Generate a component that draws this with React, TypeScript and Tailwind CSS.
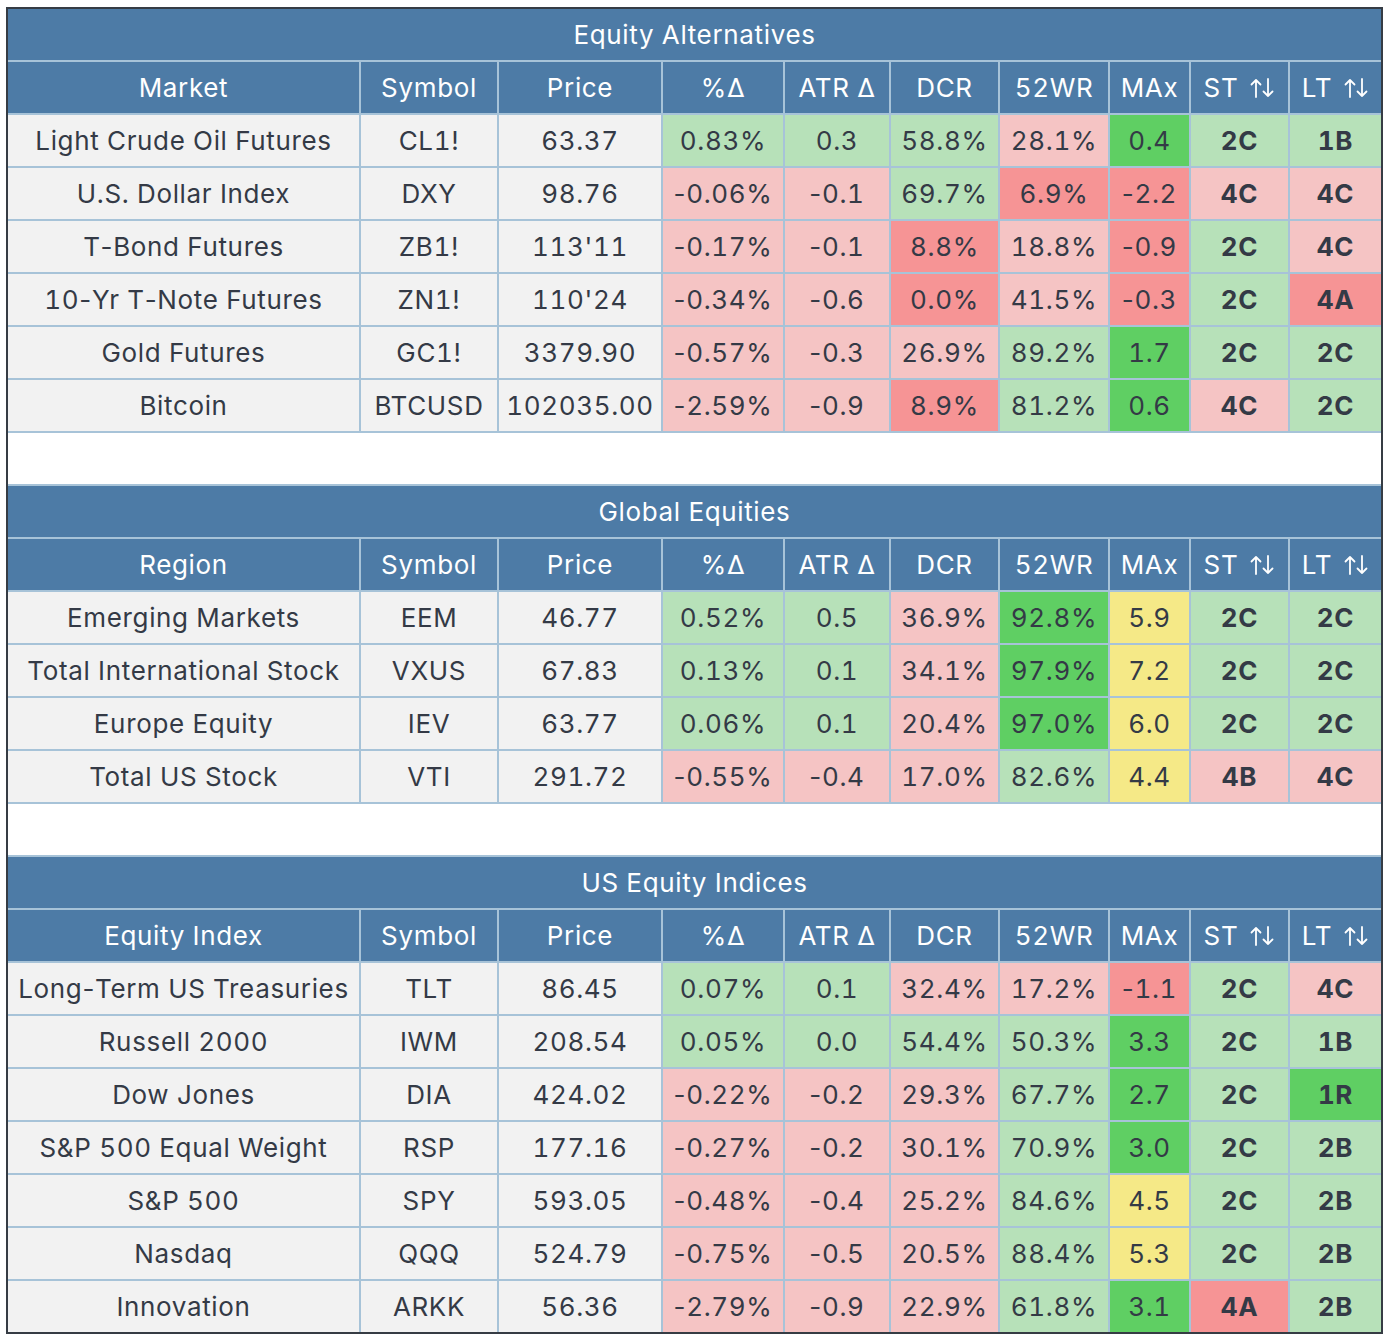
import React from 'react';

type Tone = 'g' | 'G' | 'p' | 'r' | 'y';
type Row = { name: string; symbol: string; price: string; cells: [string, Tone][] };
type Section = { title: string; first: string; rows: Row[] };

const toneBg: Record<Tone, string> = {
  g: 'bg-[#b7e1b9]',
  G: 'bg-[#5fcf63]',
  p: 'bg-[#f5c4c4]',
  r: 'bg-[#f69495]',
  y: 'bg-[#f5e987]',
};

const sections: Section[] = [
  {
    title: 'Equity Alternatives',
    first: 'Market',
    rows: [
      { name: 'Light Crude Oil Futures', symbol: 'CL1!', price: '63.37', cells: [['0.83%', 'g'], ['0.3', 'g'], ['58.8%', 'g'], ['28.1%', 'p'], ['0.4', 'G'], ['2C', 'g'], ['1B', 'g']] },
      { name: 'U.S. Dollar Index', symbol: 'DXY', price: '98.76', cells: [['-0.06%', 'p'], ['-0.1', 'p'], ['69.7%', 'g'], ['6.9%', 'r'], ['-2.2', 'r'], ['4C', 'p'], ['4C', 'p']] },
      { name: 'T-Bond Futures', symbol: 'ZB1!', price: "113'11", cells: [['-0.17%', 'p'], ['-0.1', 'p'], ['8.8%', 'r'], ['18.8%', 'p'], ['-0.9', 'r'], ['2C', 'g'], ['4C', 'p']] },
      { name: '10-Yr T-Note Futures', symbol: 'ZN1!', price: "110'24", cells: [['-0.34%', 'p'], ['-0.6', 'p'], ['0.0%', 'r'], ['41.5%', 'p'], ['-0.3', 'r'], ['2C', 'g'], ['4A', 'r']] },
      { name: 'Gold Futures', symbol: 'GC1!', price: '3379.90', cells: [['-0.57%', 'p'], ['-0.3', 'p'], ['26.9%', 'p'], ['89.2%', 'g'], ['1.7', 'G'], ['2C', 'g'], ['2C', 'g']] },
      { name: 'Bitcoin', symbol: 'BTCUSD', price: '102035.00', cells: [['-2.59%', 'p'], ['-0.9', 'p'], ['8.9%', 'r'], ['81.2%', 'g'], ['0.6', 'G'], ['4C', 'p'], ['2C', 'g']] },
    ],
  },
  {
    title: 'Global Equities',
    first: 'Region',
    rows: [
      { name: 'Emerging Markets', symbol: 'EEM', price: '46.77', cells: [['0.52%', 'g'], ['0.5', 'g'], ['36.9%', 'p'], ['92.8%', 'G'], ['5.9', 'y'], ['2C', 'g'], ['2C', 'g']] },
      { name: 'Total International Stock', symbol: 'VXUS', price: '67.83', cells: [['0.13%', 'g'], ['0.1', 'g'], ['34.1%', 'p'], ['97.9%', 'G'], ['7.2', 'y'], ['2C', 'g'], ['2C', 'g']] },
      { name: 'Europe Equity', symbol: 'IEV', price: '63.77', cells: [['0.06%', 'g'], ['0.1', 'g'], ['20.4%', 'p'], ['97.0%', 'G'], ['6.0', 'y'], ['2C', 'g'], ['2C', 'g']] },
      { name: 'Total US Stock', symbol: 'VTI', price: '291.72', cells: [['-0.55%', 'p'], ['-0.4', 'p'], ['17.0%', 'p'], ['82.6%', 'g'], ['4.4', 'y'], ['4B', 'p'], ['4C', 'p']] },
    ],
  },
  {
    title: 'US Equity Indices',
    first: 'Equity Index',
    rows: [
      { name: 'Long-Term US Treasuries', symbol: 'TLT', price: '86.45', cells: [['0.07%', 'g'], ['0.1', 'g'], ['32.4%', 'p'], ['17.2%', 'p'], ['-1.1', 'r'], ['2C', 'g'], ['4C', 'p']] },
      { name: 'Russell 2000', symbol: 'IWM', price: '208.54', cells: [['0.05%', 'g'], ['0.0', 'g'], ['54.4%', 'g'], ['50.3%', 'g'], ['3.3', 'G'], ['2C', 'g'], ['1B', 'g']] },
      { name: 'Dow Jones', symbol: 'DIA', price: '424.02', cells: [['-0.22%', 'p'], ['-0.2', 'p'], ['29.3%', 'p'], ['67.7%', 'g'], ['2.7', 'G'], ['2C', 'g'], ['1R', 'G']] },
      { name: 'S&P 500 Equal Weight', symbol: 'RSP', price: '177.16', cells: [['-0.27%', 'p'], ['-0.2', 'p'], ['30.1%', 'p'], ['70.9%', 'g'], ['3.0', 'G'], ['2C', 'g'], ['2B', 'g']] },
      { name: 'S&P 500', symbol: 'SPY', price: '593.05', cells: [['-0.48%', 'p'], ['-0.4', 'p'], ['25.2%', 'p'], ['84.6%', 'g'], ['4.5', 'y'], ['2C', 'g'], ['2B', 'g']] },
      { name: 'Nasdaq', symbol: 'QQQ', price: '524.79', cells: [['-0.75%', 'p'], ['-0.5', 'p'], ['20.5%', 'p'], ['88.4%', 'g'], ['5.3', 'y'], ['2C', 'g'], ['2B', 'g']] },
      { name: 'Innovation', symbol: 'ARKK', price: '56.36', cells: [['-2.79%', 'p'], ['-0.9', 'p'], ['22.9%', 'p'], ['61.8%', 'g'], ['3.1', 'G'], ['4A', 'r'], ['2B', 'g']] },
    ],
  },
];

// tabular figures widen the hyphen too, so keep hyphens proportional
const Txt = ({ v }: { v: string }) => {
  const parts = v.split('-');
  return (
    <span>
      {parts.map((p, i) => (
        <React.Fragment key={i}>
          {i > 0 && <span className="normal-nums">-</span>}
          {p}
        </React.Fragment>
      ))}
    </span>
  );
};

const UpDown = () => (
  <svg width="26" height="22" viewBox="0 0 26 22" fill="none" stroke="currentColor" strokeWidth="1.8" strokeLinecap="round" strokeLinejoin="round" className="ml-[11px]">
    <path d="M7 20V3M2.5 7.5L7 3l4.5 4.5" />
    <path d="M19 2v17M14.5 14.5L19 19l4.5-4.5" />
  </svg>
);

const Head = ({ children }: { children: React.ReactNode }) => (
  <div className="flex items-center justify-center bg-[#4d7ba6] text-white">{children}</div>
);

const Cell = ({ v, bg = 'bg-[#f2f2f2]', bold = false }: { v: string; bg?: string; bold?: boolean }) => (
  <div className={`flex items-center justify-center ${bg} text-[#343a46] ${bold ? 'font-bold' : ''}`}>
    <Txt v={v} />
  </div>
);

const Block = ({ s }: { s: Section }) => (
  <>
    <div className="col-span-10 flex items-center justify-center bg-[#4d7ba6] text-white">{s.title}</div>
    <Head>{s.first}</Head>
    <Head>Symbol</Head>
    <Head>Price</Head>
    <Head>%∆</Head>
    <Head>ATR ∆</Head>
    <Head>DCR</Head>
    <Head>52WR</Head>
    <Head>MAx</Head>
    <Head>ST<UpDown /></Head>
    <Head>LT<UpDown /></Head>
    {s.rows.map((r) => (
      <React.Fragment key={r.symbol}>
        <Cell v={r.name} />
        <Cell v={r.symbol} />
        <Cell v={r.price} />
        {r.cells.map(([v, t], i) => (
          <Cell key={i} v={v} bg={toneBg[t]} bold={i >= 5} />
        ))}
      </React.Fragment>
    ))}
  </>
);

export default function App() {
  return (
    <div className="min-h-screen bg-white pt-[7px] pl-[6px] font-['Inter','Noto_Sans',sans-serif] text-[26px] tracking-[0.65px] tabular-nums">
      <div className="w-[1377px] border-2 border-[#363c44]">
        <div className="grid grid-cols-[351px_136px_162px_120px_104px_107px_108px_79px_97px_91px] auto-rows-[51px] gap-[2px] bg-[#a7c3d8]">
          <Block s={sections[0]} />
          <div className="col-span-10 bg-white" />
          <Block s={sections[1]} />
          <div className="col-span-10 bg-white" />
          <Block s={sections[2]} />
        </div>
      </div>
    </div>
  );
}
